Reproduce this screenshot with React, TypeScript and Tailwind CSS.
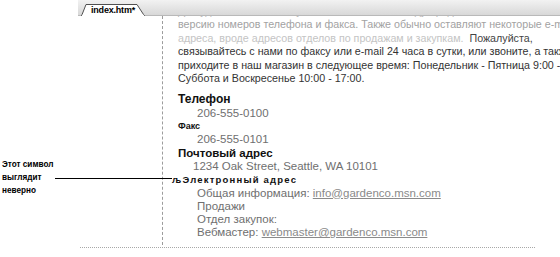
import React from 'react';

const values = 'pl-[19px] text-[11.5px] text-[#6f6f6f]';

export default function App() {
  return (
    <div className="relative w-[560px] h-[257px] overflow-hidden bg-white font-['Liberation_Sans',Arial,sans-serif]">
      {/* tab strip */}
      <div className="flex h-[16px]">
        <div className="w-[78px] bg-white" />
        <div className="flex flex-1 items-end bg-gradient-to-b from-[#f2f2f2] to-[#d8d8d8] border-b border-[#b9b9b9] pl-[3px]">
          <div className="relative w-[64px] h-[12px] -mb-px">
            <svg className="absolute inset-0" width="64" height="12" viewBox="0 0 64 12">
              <polygon points="0.5,12 5,0.5 56,0.5 63.5,12" fill="#ffffff" stroke="#505050" strokeWidth="1" />
              <line x1="1" y1="11.5" x2="63" y2="11.5" stroke="#ffffff" strokeWidth="1.5" />
            </svg>
            <span className="relative block pl-[10px] text-[9px] leading-[12px] font-bold text-black tracking-[-0.2px]">index.htm*</span>
          </div>
        </div>
      </div>

      {/* page body */}
      <div className="relative flex h-[229px]">
        <div className="w-[162px] pt-[142px] pl-[2px] text-[8.2px] leading-[13px] font-bold text-black">
          <div>Этот символ</div>
          <div>выглядит</div>
          <div>неверно</div>
        </div>
        <div className="absolute left-[55px] top-[162px] w-[117px] border-t border-black" />

        <div className="flex-1 overflow-hidden border-l border-dashed border-[#9c9c9c] pl-[15px]">
          <div className="-mt-[11px] text-[10.7px] leading-[13.4px] whitespace-nowrap text-[#333]">
            <div className="text-[#b8b8b8]">Для удобства клиентов укажите местный и междугородный</div>
            <div className="text-[#a2a2a2]">версию номеров телефона и факса. Также обычно оставляют некоторые е-mail</div>
            <div>
              <span className="text-[#c4c4c4]">адреса, вроде адресов отделов по продажам и закупкам.</span>
              <span className="text-[#444]">&nbsp; Пожалуйста,</span>
            </div>
            <div>связывайтесь с нами по факсу или e-mail 24 часа в сутки, или звоните, а также</div>
            <div>приходите в наш магазин в следующее время: Понедельник - Пятница 9:00 - 18:00,</div>
            <div>Суббота и Воскресенье 10:00 - 17:00.</div>

            <div className="mt-[8px] leading-[13.3px]">
              <div className="text-[12px] font-bold text-[#111]">Телефон</div>
              <div className={values}>206-555-0100</div>
              <div className="text-[9px] font-bold text-[#111]">Факс</div>
              <div className={values}>206-555-0101</div>
              <div className="text-[11.5px] font-bold text-[#111]">Почтовый адрес</div>
              <div className="pl-[15px] text-[11.5px] text-[#6f6f6f]">1234 Oak Street, Seattle, WA 10101</div>
              <div className="-ml-[6px] text-[9.5px] font-bold tracking-[1.2px] text-[#111]">љЭлектронный адрес</div>
              <div className={values}>
                Общая информация: <span className="underline text-[#8a8a8a]">info@gardenco.msn.com</span>
              </div>
              <div className={values}>Продажи</div>
              <div className={values}>Отдел закупок:</div>
              <div className={values}>
                Вебмастер: <span className="underline text-[#8a8a8a]">webmaster@gardenco.msn.com</span>
              </div>
            </div>
          </div>
        </div>
      </div>

      <div className="ml-[80px] mt-[2px] w-[455px] border-t border-dotted border-[#a8a8a8]" />
    </div>
  );
}
